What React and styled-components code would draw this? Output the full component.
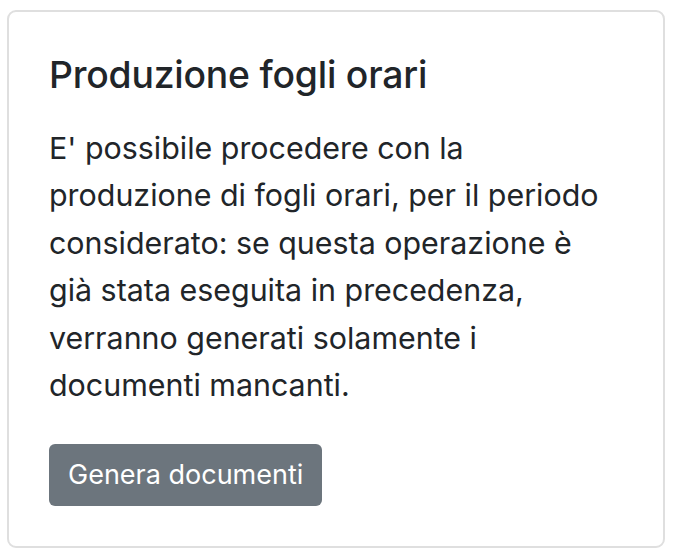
import React from "react";
import styled, { createGlobalStyle } from "styled-components";

const GlobalStyle = createGlobalStyle`
  html, body { margin: 0; padding: 0; background: #ffffff; }
  body {
    font-family: Inter, "Noto Sans", "Liberation Sans", sans-serif;
    color: #212529;
  }
`;

const Page = styled.div`
  padding: 10px 11px 10px 7px;
`;

const Card = styled.section`
  border: 2px solid #dfdfdf;
  border-radius: 9px;
  background: #ffffff;
  padding: 41px 40px 40px 40px;
  display: flex;
  flex-direction: column;
  align-items: flex-start;
`;

const Title = styled.h5`
  margin: 0;
  font-size: 37.3px;
  font-weight: 500;
  line-height: 44px;
  letter-spacing: -0.2px;
`;

const Text = styled.p`
  margin: 28px 0 35px 0;
  font-size: 30.4px;
  font-weight: 400;
  line-height: 47.4px;
  white-space: nowrap;
`;

const Button = styled.button`
  font-family: inherit;
  font-size: 27px;
  line-height: 62px;
  height: 62px;
  padding: 0 19px;
  border: none;
  border-radius: 6px;
  background: #6c757d;
  color: #ffffff;
  cursor: pointer;
`;

const lines = [
  "E' possibile procedere con la",
  "produzione di fogli orari, per il periodo",
  "considerato: se questa operazione è",
  "già stata eseguita in precedenza,",
  "verranno generati solamente i",
  "documenti mancanti.",
];

export default function App() {
  return (
    <Page>
      <GlobalStyle />
      <Card>
        <Title>Produzione fogli orari</Title>
        <Text>
          {lines.map((l, i) => (
            <React.Fragment key={i}>
              {l}
              {i < lines.length - 1 && <br />}
            </React.Fragment>
          ))}
        </Text>
        <Button>Genera documenti</Button>
      </Card>
    </Page>
  );
}
